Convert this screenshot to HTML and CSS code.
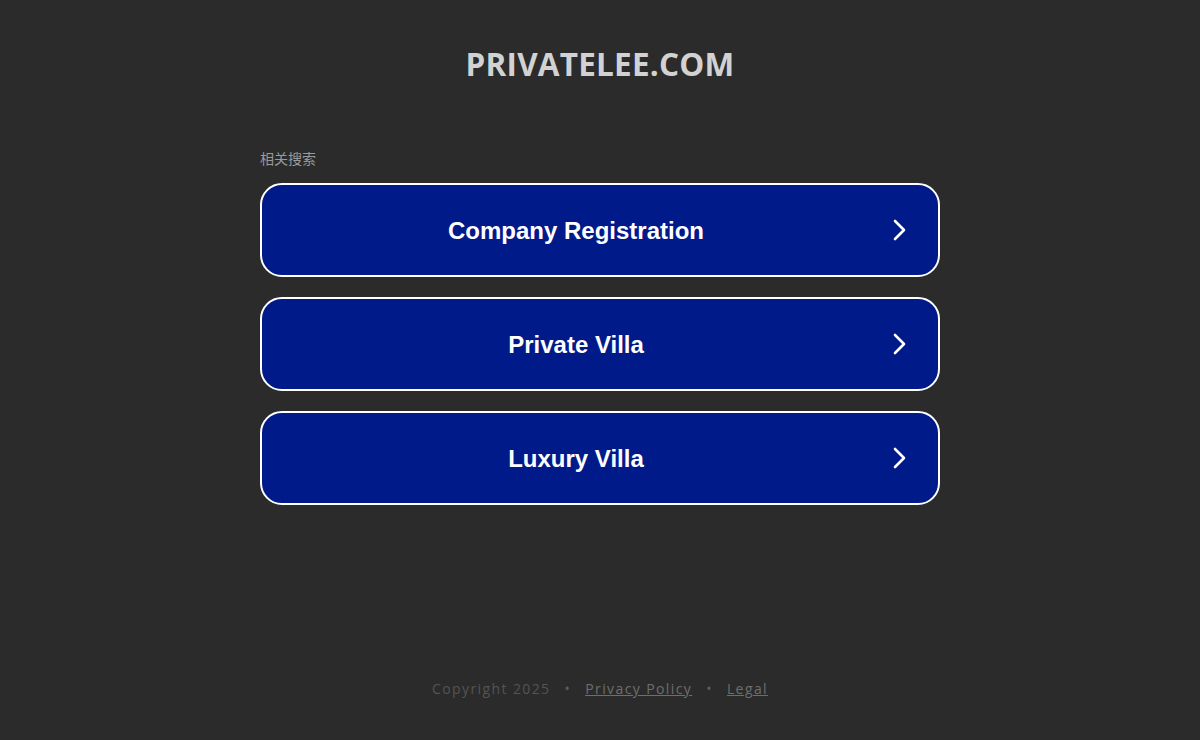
FILE: index.html
```html
<!DOCTYPE html>
<html lang="en">
<head>
<meta charset="utf-8">
<title>privatelee.com</title>
<link rel="stylesheet" href="styles.css">
</head>
<body>
<div class="page">
  <header class="header">
    <h1 class="domain">PRIVATELEE.COM</h1>
  </header>
  <main class="main">
    <div class="related">相关搜索</div>
    <div class="links">
      <a class="link" href="#"><span class="label">Company Registration</span><svg class="chev" viewBox="0 0 20 24" width="20" height="24"><path d="M5 3 L14 12 L5 21" fill="none" stroke="#fff" stroke-width="2.6" stroke-linecap="round" stroke-linejoin="round"/></svg></a>
      <a class="link" href="#"><span class="label">Private Villa</span><svg class="chev" viewBox="0 0 20 24" width="20" height="24"><path d="M5 3 L14 12 L5 21" fill="none" stroke="#fff" stroke-width="2.6" stroke-linecap="round" stroke-linejoin="round"/></svg></a>
      <a class="link" href="#"><span class="label">Luxury Villa</span><svg class="chev" viewBox="0 0 20 24" width="20" height="24"><path d="M5 3 L14 12 L5 21" fill="none" stroke="#fff" stroke-width="2.6" stroke-linecap="round" stroke-linejoin="round"/></svg></a>
    </div>
  </main>
  <footer class="footer">
    <span class="copy">Copyright 2025</span>
    <span class="dot">•</span>
    <a class="flink" href="#">Privacy Policy</a>
    <span class="dot">•</span>
    <a class="flink" href="#">Legal</a>
  </footer>
</div>
</body>
</html>
```
FILE: styles.css
```css
html, body {
  margin: 0;
  padding: 0;
  background: #2b2b2b;
}
.page {
  height: 740px;
  display: flex;
  flex-direction: column;
  align-items: center;
  font-family: "Open Sans", "Liberation Sans", sans-serif;
}
.header {
  padding-top: 43px;
  height: 107px;
  box-sizing: border-box;
}
.domain {
  margin: 0;
  font-family: "Open Sans", sans-serif;
  font-weight: 700;
  font-size: 31.5px;
  line-height: 42px;
  color: #d2d2d2;
  letter-spacing: 0.2px;
}
.main {
  width: 680px;
}
.related {
  font-family: "Noto Sans CJK SC", sans-serif;
  font-size: 14px;
  line-height: 20px;
  color: #9a9a9a;
  margin-top: 41px;
  margin-bottom: 15px;
}
.links {
  display: flex;
  flex-direction: column;
  gap: 20px;
}
.link {
  display: flex;
  align-items: center;
  height: 94px;
  box-sizing: border-box;
  border: 2px solid #ffffff;
  border-radius: 22px;
  background: #011a8a;
  text-decoration: none;
  color: #ffffff;
}
.label {
  flex: 1;
  text-align: center;
  font-family: "Liberation Sans", Arial, sans-serif;
  font-weight: 700;
  font-size: 24px;
  padding-top: 2px;
}
.chev {
  margin-right: 28px;
  display: block;
}
.footer {
  margin-top: auto;
  margin-bottom: 42px;
  font-size: 14px;
  letter-spacing: 1.4px;
  color: #545454;
  display: flex;
  gap: 14px;
  align-items: center;
}
.dot {
  color: #5e5e5e;
}
.flink {
  color: #6e6e6e;
  text-decoration: underline;
}
```
